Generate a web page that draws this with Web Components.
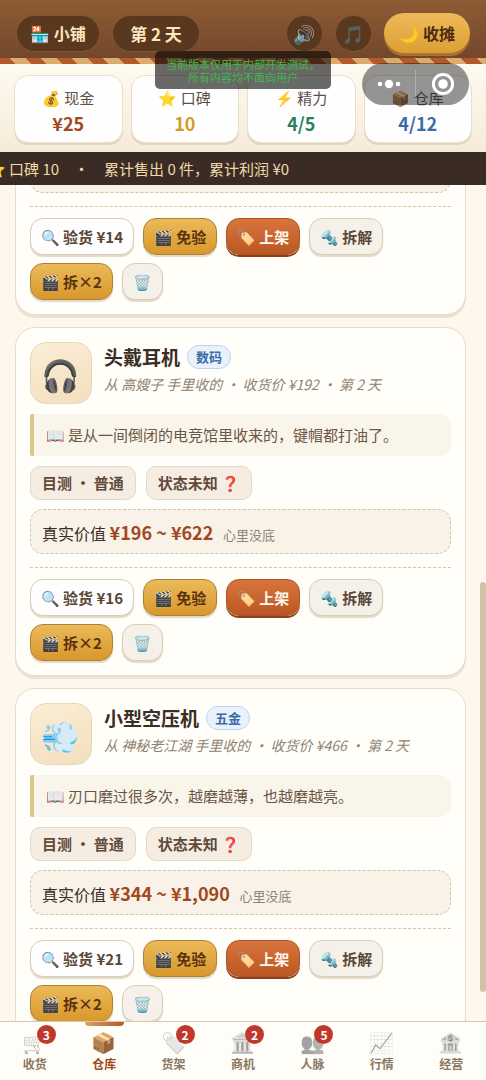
<!DOCTYPE html>
<html lang="zh-CN">
<head>
<meta charset="UTF-8">
<meta name="viewport" content="width=device-width, initial-scale=1">
<title>小铺</title>
<style>
  body {
    margin: 0;
    height: 100vh;
    overflow: hidden;
    font-family: "Noto Sans CJK SC", "Noto Color Emoji", sans-serif;
    background: #fef7ec;
    color: #3a2e26;
  }
</style>
</head>
<body>
<shop-app></shop-app>

<script>
  class ShopApp extends HTMLElement {
    constructor() {
      super();
      this.attachShadow({ mode: 'open' });
      this.shadowRoot.innerHTML = `
      <style>
        :host {
          display: flex;
          flex-direction: column;
          height: 100%;
          position: relative;
        }

        .stats {
          display: grid;
          grid-template-columns: repeat(4, 1fr);
          gap: 8px;
          padding: 11px 14px 9px;
          background: linear-gradient(#fefaf0, #f5ebda);
        }

        main {
          flex: 1;
          min-height: 0;
          overflow: hidden;
          position: relative;
        }

        .list {
          display: flex;
          flex-direction: column;
          gap: 12px;
          padding: 0 20px 12px 15px;
        }

        .thumb {
          position: absolute;
          right: 0;
          top: 47.5%;
          width: 6px;
          height: 49%;
          border-radius: 3px;
          background: #d1c3a5;
        }
      </style>

      <shop-header></shop-header>
      <section class="stats">
        <stat-card icon="💰" label="现金" style="--value: #a0481f">¥25</stat-card>
        <stat-card icon="⭐" label="口碑" style="--value: #d59a2e">10</stat-card>
        <stat-card icon="⚡" label="精力" style="--value: #2c7f62">4/5</stat-card>
        <stat-card icon="📦" label="仓库" style="--value: #3d6ba8">4/12</stat-card>
      </section>
      <news-ticker>
        <span>⭐ 口碑 10</span>
        <span>·</span>
        <span>累计售出 0 件，累计利润 ¥0</span>
      </news-ticker>
      <main>
        <div class="list">
          <item-card scrolled fee="¥14"></item-card>
          <item-card icon="🎧" name="头戴耳机" kind="数码" fee="¥16" price="¥196 ~ ¥622">
            <span slot="source">从 高嫂子 手里收的 · 收货价 ¥192 · 第 2 天</span>
            <span slot="note">📖 是从一间倒闭的电竞馆里收来的，键帽都打油了。</span>
          </item-card>
          <item-card icon="💨" name="小型空压机" kind="五金" fee="¥21" price="¥344 ~ ¥1,090">
            <span slot="source">从 神秘老江湖 手里收的 · 收货价 ¥466 · 第 2 天</span>
            <span slot="note">📖 刃口磨过很多次，越磨越薄，也越磨越亮。</span>
          </item-card>
        </div>
        <div class="thumb"></div>
      </main>
      <tab-bar></tab-bar>
      <dev-notice>当前版本仅用于内部开发测试，<br>所有内容均不面向用户</dev-notice>
      <host-capsule></host-capsule>
    `;
    }
  }

  class ShopHeader extends HTMLElement {
    constructor() {
      super();
      this.attachShadow({ mode: 'open' });
      this.shadowRoot.innerHTML = `
      <style>
        :host {
          display: block;
          background: linear-gradient(#8e5c35, #70452a);
        }

        .bar {
          display: flex;
          align-items: center;
          gap: 12px;
          padding: 13px 16px 5px;
        }

        .pill, .round {
          box-sizing: border-box;
          height: 37px;
          display: flex;
          align-items: center;
          justify-content: center;
          white-space: nowrap;
          background: #5a3820;
          border: 1px solid #7d5636;
          border-radius: 19px;
          color: #fbe6bd;
          font-family: inherit;
        }

        .pill {
          min-width: 84px;
          padding: 0 12px;
          font-size: 16px;
          font-weight: bold;
        }

        .day {
          min-width: 88px;
          font-size: 17px;
        }

        .round {
          width: 37px;
          padding: 0;
          font-size: 18px;
        }

        .round span {
          opacity: .75;
        }

        .spacer {
          flex: 1;
        }

        .close {
          height: 40px;
          padding: 0 15px;
          border: 0;
          border-radius: 20px;
          background: linear-gradient(#edba58, #dc9f35);
          box-shadow: 0 3px 0 #a8742b;
          color: #4b2a10;
          font-family: inherit;
          font-size: 16px;
          font-weight: bold;
          white-space: nowrap;
        }

        .awning {
          height: 6px;
          background: repeating-linear-gradient(45deg, #b3592c 0 11px, #dbad6c 11px 22px);
        }
      </style>

      <div class="bar">
        <div class="pill">🏪 小铺</div>
        <div class="pill day">第 2 天</div>
        <div class="spacer"></div>
        <button class="round" aria-label="音效"><span>🔊</span></button>
        <button class="round" aria-label="音乐"><span>🎵</span></button>
        <button class="close">🌙 收摊</button>
      </div>
      <div class="awning"></div>
    `;
    }
  }

  class StatCard extends HTMLElement {
    constructor() {
      super();
      this.attachShadow({ mode: 'open' });
      this.shadowRoot.innerHTML = `
      <style>
        :host {
          display: block;
          padding: 10px 0 6px;
          text-align: center;
          white-space: nowrap;
          background: #fffefe;
          border: 1px solid #ebdfca;
          border-radius: 14px;
          box-shadow: 0 2px 0 #e3d5be;
        }

        .label {
          font-size: 15px;
          line-height: 24px;
          color: #5c4f45;
        }

        .value {
          font-size: 18px;
          line-height: 26px;
          font-weight: bold;
          color: var(--value);
        }
      </style>

      <div class="label">${this.getAttribute('icon')} ${this.getAttribute('label')}</div>
      <div class="value"><slot></slot></div>
    `;
    }
  }

  class NewsTicker extends HTMLElement {
    constructor() {
      super();
      this.attachShadow({ mode: 'open' });
      this.shadowRoot.innerHTML = `
      <style>
        :host {
          display: block;
          overflow: hidden;
          background: #3a2c24;
          color: #f0d8a8;
          font-size: 15px;
          line-height: 33px;
        }

        .track {
          display: flex;
          gap: 15px;
          margin-left: -13px;
          white-space: nowrap;
        }
      </style>

      <div class="track"><slot></slot></div>
    `;
    }
  }

  class ActionButton extends HTMLElement {
    constructor() {
      super();
      this.attachShadow({ mode: 'open' });
      this.shadowRoot.innerHTML = `
      <style>
        :host {
          display: block;
        }

        button {
          display: block;
          height: 37px;
          padding: 0 10px;
          border: 1px solid #d9cdb8;
          border-radius: 13px;
          background: #fffefe;
          box-shadow: 0 2px 1px #e2d9c9;
          color: #5a4636;
          font-family: inherit;
          font-size: 15px;
          font-weight: bold;
          white-space: nowrap;
        }

        :host([kind="gold"]) button {
          background: linear-gradient(#ebba59, #d8982c);
          border-color: #ad8038;
          color: #5a3210;
        }

        :host([kind="primary"]) button {
          background: linear-gradient(#d8743c, #bb5724);
          border-color: #ad5427;
          box-shadow: 0 2px 0 #8e4119;
          color: #fff8ec;
        }

        :host([kind="muted"]) button {
          background: #f6f1e8;
        }
      </style>

      <button><slot></slot></button>
    `;
    }
  }

  class ItemCard extends HTMLElement {
    constructor() {
      super();
      this.attachShadow({ mode: 'open' });
      const attr = (name) => this.getAttribute(name);
      // a scrolled card only shows the end of its value box and the actions
      const details = this.hasAttribute('scrolled') ? `
        <div class="cut"><div class="worth"></div></div>` : `
        <header>
          <div class="icon">${attr('icon')}</div>
          <div>
            <div class="title"><h2>${attr('name')}</h2><span class="kind">${attr('kind')}</span></div>
            <div class="source"><slot name="source"></slot></div>
          </div>
        </header>
        <div class="note"><slot name="note"></slot></div>
        <div class="tags"><span>目测 · 普通</span><span>状态未知 ❓</span></div>
        <div class="worth"><span>真实价值</span> <b>${attr('price')}</b> <small>心里没底</small></div>`;

      this.shadowRoot.innerHTML = `
      <style>
        :host {
          display: block;
          padding: 14px;
          background: #fffef8;
          border: 1px solid #e6dccb;
          border-radius: 20px;
          box-shadow: 0 3px 0 #ece2d4;
        }

        :host([scrolled]) {
          padding-top: 0;
          border-top: 0;
          border-top-left-radius: 0;
          border-top-right-radius: 0;
        }

        header {
          display: flex;
          gap: 12px;
        }

        .icon {
          box-sizing: border-box;
          width: 62px;
          height: 62px;
          flex: none;
          display: flex;
          align-items: center;
          justify-content: center;
          font-size: 31px;
          background: linear-gradient(160deg, #fbeed6, #f2dfbd);
          border: 1px solid #e8d8ba;
          border-radius: 16px;
        }

        .title {
          display: flex;
          align-items: center;
          gap: 7px;
          height: 29px;
        }

        h2 {
          margin: 0;
          font-size: 19px;
          line-height: 29px;
        }

        .kind {
          padding: 0 8px;
          font-size: 13px;
          line-height: 22px;
          font-weight: bold;
          color: #3d6ba8;
          background: #e9f1fc;
          border: 1px solid #c0d3ee;
          border-radius: 12px;
        }

        .source {
          font-size: 14px;
          line-height: 26px;
          font-style: italic;
          color: #8f8171;
          white-space: nowrap;
        }

        .note {
          margin-top: 10px;
          padding: 8px 12px;
          font-size: 15px;
          line-height: 26px;
          color: #6a5644;
          background: #faf5ea;
          border-left: 4px solid #dcc68c;
          border-radius: 2px 12px 12px 2px;
        }

        .tags {
          display: flex;
          gap: 10px;
          margin-top: 10px;
        }

        .tags span {
          padding: 0 11px;
          font-size: 15px;
          line-height: 32px;
          font-weight: bold;
          color: #5f4a3a;
          background: #f5ede1;
          border: 1px solid #e4d8c6;
          border-radius: 10px;
        }

        .worth {
          box-sizing: border-box;
          height: 45px;
          margin-top: 9px;
          padding: 0 11px;
          font-size: 16px;
          line-height: 44px;
          background: #f8f2e8;
          border: 1px dashed #d3c4a8;
          border-radius: 13px;
          white-space: nowrap;
        }

        .worth b {
          font-size: 18px;
          color: #a0481f;
        }

        .worth small {
          margin-left: 6px;
          font-size: 13px;
          color: #928474;
        }

        .cut {
          display: flex;
          flex-direction: column;
          justify-content: flex-end;
          height: 8px;
          overflow: hidden;
        }

        .cut .worth {
          flex: none;
        }

        .actions {
          display: flex;
          flex-wrap: wrap;
          gap: 8px 9px;
          margin-top: 13px;
          padding-top: 11px;
          border-top: 1px dashed #d3c4a8;
        }
      </style>

      ${details}
      <div class="actions">
        <action-button>🔍 验货 ${attr('fee')}</action-button>
        <action-button kind="gold">🎬 免验</action-button>
        <action-button kind="primary">🏷️ 上架</action-button>
        <action-button kind="muted">🔩 拆解</action-button>
        <action-button kind="gold">🎬 拆×2</action-button>
        <action-button kind="muted">🗑️</action-button>
      </div>
    `;
    }
  }

  class TabItem extends HTMLElement {
    constructor() {
      super();
      this.attachShadow({ mode: 'open' });
      const count = this.getAttribute('count');
      this.shadowRoot.innerHTML = `
      <style>
        :host {
          display: block;
        }

        button {
          position: relative;
          display: flex;
          flex-direction: column;
          align-items: center;
          width: 100%;
          padding: 5px 0 8px;
          border: 0;
          background: none;
          color: #8b7763;
          font-family: inherit;
          font-size: 12px;
          line-height: 16px;
          font-weight: bold;
        }

        .icon {
          font-size: 20px;
          line-height: 29px;
          font-weight: normal;
          filter: grayscale(1);
          opacity: .6;
        }

        .count {
          position: absolute;
          top: 3px;
          left: calc(50% + 2px);
          width: 19px;
          border-radius: 10px;
          background: #bf382c;
          color: #fff;
          line-height: 19px;
        }

        :host([active]) button {
          color: #a0481f;
        }

        :host([active]) button::before {
          content: "";
          position: absolute;
          top: 0;
          width: 39px;
          height: 4px;
          border-radius: 0 0 4px 4px;
          background: linear-gradient(90deg, #d9a35c, #b3592c);
        }

        :host([active]) .icon {
          filter: none;
          opacity: 1;
        }
      </style>

      <button>
        <span class="icon">${this.getAttribute('icon')}</span>
        <slot></slot>
        ${count ? `<span class="count">${count}</span>` : ''}
      </button>
    `;
    }
  }

  class TabBar extends HTMLElement {
    constructor() {
      super();
      this.attachShadow({ mode: 'open' });
      this.shadowRoot.innerHTML = `
      <style>
        :host {
          display: block;
          background: #fffdf7;
          border-top: 1px solid #d9c6ae;
        }

        nav {
          display: grid;
          grid-template-columns: repeat(7, 1fr);
        }
      </style>

      <nav>
        <tab-item icon="🛒" count="3">收货</tab-item>
        <tab-item icon="📦" active>仓库</tab-item>
        <tab-item icon="🏷️" count="2">货架</tab-item>
        <tab-item icon="🏛️" count="2">商机</tab-item>
        <tab-item icon="👥" count="5">人脉</tab-item>
        <tab-item icon="📈">行情</tab-item>
        <tab-item icon="🏦">经营</tab-item>
      </nav>
    `;
    }
  }

  class DevNotice extends HTMLElement {
    constructor() {
      super();
      this.attachShadow({ mode: 'open' });
      this.shadowRoot.innerHTML = `
      <style>
        :host {
          position: absolute;
          top: 51px;
          left: 50%;
          transform: translateX(-50%);
          padding: 7px 11px 5px;
          border-radius: 5px;
          background: rgba(5, 5, 5, .6);
          color: #3fb84a;
          font-size: 11px;
          line-height: 13px;
          text-align: center;
          white-space: nowrap;
        }
      </style>

      <slot></slot>
    `;
    }
  }

  class HostCapsule extends HTMLElement {
    constructor() {
      super();
      this.attachShadow({ mode: 'open' });
      this.shadowRoot.innerHTML = `
      <style>
        :host {
          position: absolute;
          top: 63px;
          right: 17px;
          display: flex;
          align-items: center;
          height: 42px;
          border-radius: 21px;
          background: rgba(25, 25, 25, .46);
        }

        button {
          width: 53px;
          height: 28px;
          padding: 0;
          border: 0;
          background: none;
        }

        button + button {
          width: 54px;
          border-left: 1px solid rgba(255, 255, 255, .25);
        }

        svg {
          display: block;
          margin: auto;
        }
      </style>

      <button aria-label="更多">
        <svg width="24" height="24" fill="#fff">
          <circle cx="3" cy="12" r="2.3"/><circle cx="12" cy="12" r="4.2"/><circle cx="21" cy="12" r="2.3"/>
        </svg>
      </button>
      <button aria-label="关闭">
        <svg width="24" height="24" fill="none" stroke="#fff">
          <circle cx="12" cy="12" r="9.6" stroke-width="3"/><circle cx="12" cy="12" r="4.8" fill="#fff" stroke="none"/>
        </svg>
      </button>
    `;
    }
  }

  customElements.define('action-button', ActionButton);
  customElements.define('item-card', ItemCard);
  customElements.define('stat-card', StatCard);
  customElements.define('news-ticker', NewsTicker);
  customElements.define('shop-header', ShopHeader);
  customElements.define('tab-item', TabItem);
  customElements.define('tab-bar', TabBar);
  customElements.define('dev-notice', DevNotice);
  customElements.define('host-capsule', HostCapsule);
  customElements.define('shop-app', ShopApp);
</script>
</body>
</html>
